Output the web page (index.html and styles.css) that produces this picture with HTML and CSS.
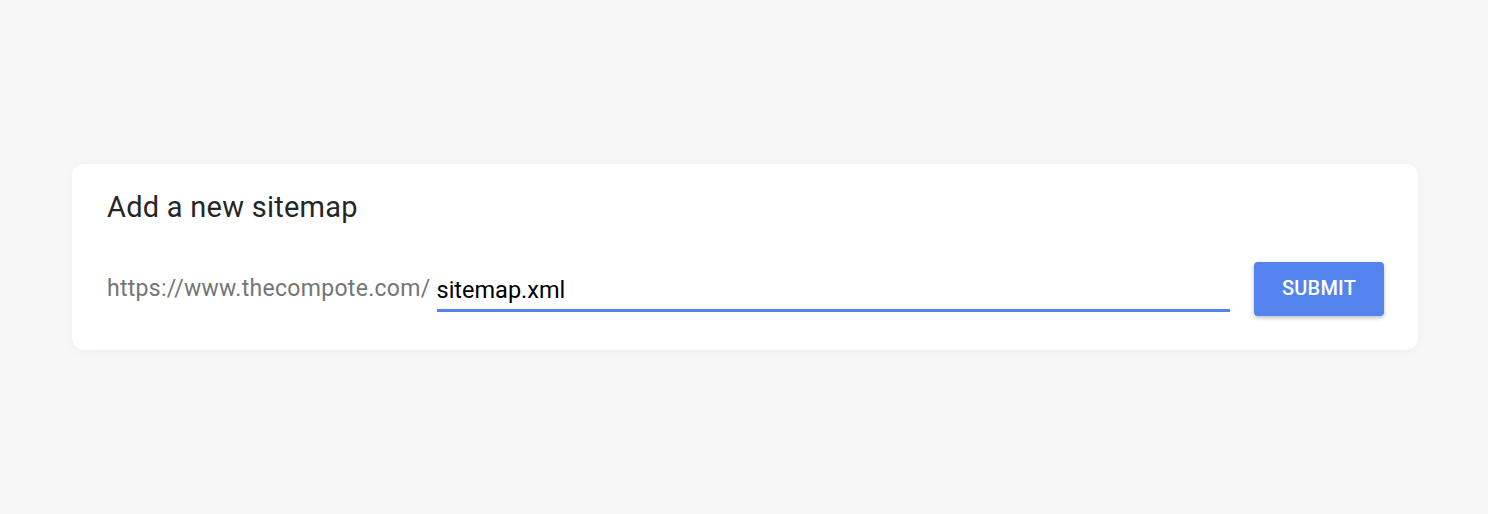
FILE: index.html
```html
<!DOCTYPE html>
<html lang="en">
<head>
<meta charset="utf-8">
<title>Add a new sitemap</title>
<link rel="stylesheet" href="styles.css">
</head>
<body>
<main class="page">
  <section class="card">
    <h1 class="card-title">Add a new sitemap</h1>
    <div class="form-row">
      <span class="prefix">https://www.thecompote.com/</span>
      <div class="field"><span class="field-value">sitemap.xml</span></div>
      <button class="submit" type="button">SUBMIT</button>
    </div>
  </section>
</main>
</body>
</html>
```

FILE: styles.css
```css
html, body {
  margin: 0;
  padding: 0;
}
body {
  background: #f7f7f7;
  font-family: Roboto, "Liberation Sans", Arial, sans-serif;
  width: 1488px;
  height: 514px;
  overflow: hidden;
}
.page {
  padding: 164px 70px 0 72px;
}
.card {
  box-sizing: border-box;
  width: 1346px;
  height: 186px;
  background: #ffffff;
  border-radius: 12px;
  box-shadow: 0 2px 12px rgba(0, 0, 0, 0.04);
  padding: 26px 34px 0 35px;
}
.card-title {
  margin: 0;
  font-size: 29px;
  line-height: 34px;
  font-weight: 400;
  letter-spacing: 0.25px;
  color: #262626;
}
.form-row {
  display: flex;
  align-items: flex-start;
  margin-top: 38px;
}
.prefix {
  font-size: 23px;
  line-height: 27px;
  letter-spacing: 0.3px;
  color: #757575;
  padding-top: 13px;
  margin-right: 6px;
  white-space: nowrap;
}
.field {
  flex: 1;
  margin-top: 15px;
  height: 32px;
  border-bottom: 3px solid #5383ec;
  margin-right: 24px;
}
.field-value {
  display: block;
  font-size: 23.5px;
  line-height: 27px;
  color: #000000;
}
.submit {
  width: 130px;
  height: 54px;
  border: none;
  border-radius: 4px;
  background: #5383ec;
  color: #ffffff;
  font-family: Roboto, "Liberation Sans", Arial, sans-serif;
  font-size: 20px;
  font-weight: 500;
  letter-spacing: 0.2px;
  box-shadow: 0 2px 4px rgba(0, 0, 0, 0.25);
  padding: 0;
  padding-bottom: 3px;
  cursor: pointer;
}
```
